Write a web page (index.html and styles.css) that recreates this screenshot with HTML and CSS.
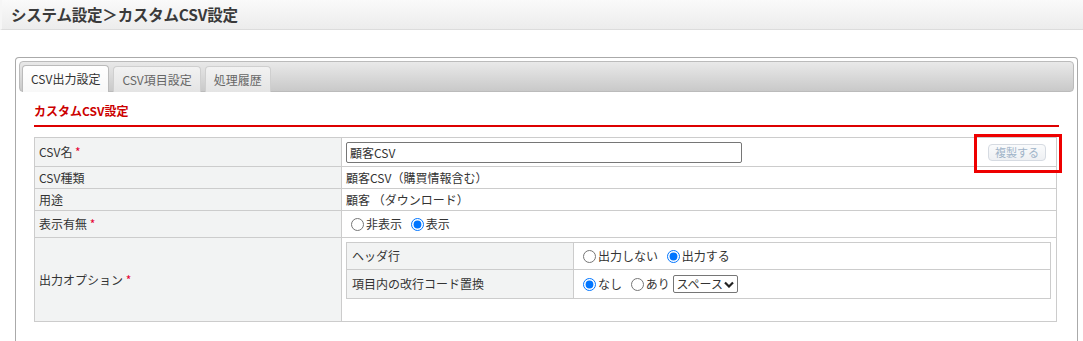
FILE: index.html
```html
<!DOCTYPE html>
<html lang="ja">
<head>
    <meta charset="UTF-8">
    <meta name="viewport" content="width=device-width, initial-scale=1.0">
    <title>カスタムCSV設定</title>
    <link rel="stylesheet" href="styles.css">
</head>
<body>
    <div class="page-header">
        <h1>システム設定＞カスタムCSV設定</h1>
    </div>

    <div class="panel">
        <!-- Tabs -->
        <div class="tab-bar">
            <div class="tab active">CSV出力設定</div>
            <div class="tab">CSV項目設定</div>
            <div class="tab">処理履歴</div>
        </div>

        <div class="panel-body">
            <h2 class="section-title">カスタムCSV設定</h2>

            <table class="form-table">
                <tr class="row-name">
                    <th>CSV名 <span class="req">*</span></th>
                    <td>
                        <div class="name-cell">
                            <input type="text" class="name-input" value="顧客CSV">
                            <span class="mark">
                                <button class="copy-btn" disabled>複製する</button>
                            </span>
                        </div>
                    </td>
                </tr>
                <tr class="row-short">
                    <th>CSV種類</th>
                    <td>顧客CSV（購買情報含む）</td>
                </tr>
                <tr class="row-short">
                    <th>用途</th>
                    <td>顧客 （ダウンロード）</td>
                </tr>
                <tr class="row-visible">
                    <th>表示有無 <span class="req">*</span></th>
                    <td>
                        <label><input type="radio" name="visible">非表示</label>
                        <label><input type="radio" name="visible" checked>表示</label>
                    </td>
                </tr>
                <tr class="row-options">
                    <th>出力オプション <span class="req">*</span></th>
                    <td class="options-cell">
                        <table class="sub-table">
                            <tr class="sub-row1">
                                <th>ヘッダ行</th>
                                <td>
                                    <label><input type="radio" name="header">出力しない</label>
                                    <label><input type="radio" name="header" checked>出力する</label>
                                </td>
                            </tr>
                            <tr class="sub-row2">
                                <th>項目内の改行コード置換</th>
                                <td>
                                    <label><input type="radio" name="newline" checked>なし</label>
                                    <label><input type="radio" name="newline">あり</label>
                                    <select class="replace-select">
                                        <option>スペース</option>
                                    </select>
                                </td>
                            </tr>
                        </table>
                    </td>
                </tr>
            </table>
        </div>
    </div>
</body>
</html>
```

FILE: styles.css
```css
body {
    margin: 0;
    font-family: "Noto Sans CJK JP", sans-serif;
    font-size: 12px;
    color: #333;
    background: #fff;
    height: 341px;
    overflow: hidden;
}
.page-header {
    height: 29px;
    background: linear-gradient(#fafafa, #ececec);
    border-bottom: 1px solid #dcdcdc;
    border-left: 2px solid #f6f6f6;
}
.page-header h1 {
    margin: 0;
    padding-left: 9px;
    font-size: 15.5px;
    line-height: 29px;
    font-weight: bold;
    color: #3a3a3a;
    letter-spacing: -0.2px;
}
.panel {
    margin: 27px 0 0 15px;
    width: 1055px;
    height: 280px;
    padding: 3px;
    border: 1px solid #aaa;
    border-bottom: none;
    border-radius: 4px 4px 0 0;
}
.tab-bar {
    display: flex;
    align-items: flex-end;
    height: 29px;
    padding-left: 2px;
    border: 1px solid #bbb;
    border-radius: 4px;
    background: linear-gradient(#e9e9e9, #c9c9c9);
}
.tab {
    height: 25px;
    line-height: 25px;
    padding: 0 8px;
    margin-right: 4px;
    margin-bottom: -1px;
    border: 1px solid #cfcfcf;
    border-bottom: none;
    border-radius: 4px 4px 0 0;
    background: linear-gradient(#f2f2f2, #e4e4e4);
    color: #666;
}
.tab.active {
    background: linear-gradient(#fff, #f8f8f8);
    border-color: #bbb;
    color: #333;
    height: 26px;
}
.panel-body {
    padding: 10px 15px;
}
.section-title {
    margin: 0 0 10px;
    padding-bottom: 5px;
    font-size: 12px;
    line-height: 18px;
    font-weight: bold;
    color: #c00;
    border-bottom: 2px solid #d00;
}
.form-table {
    width: 1023px;
    border-collapse: collapse;
}
.form-table th,
.form-table td {
    border: 1px solid #ccc;
    padding: 0 4px;
    text-align: left;
    font-weight: normal;
    line-height: 18px;
}
.form-table > tbody > tr > th {
    width: 298px;
    background: #f2f3f3;
}
.req {
    color: #e60033;
}
.row-name { height: 29px; }
.row-short { height: 22px; }
.row-visible { height: 27px; }
.row-options { height: 84px; }
.name-cell {
    display: flex;
    align-items: center;
    justify-content: space-between;
    padding-right: 6px;
}
.name-input {
    width: 396px;
    height: 21px;
    box-sizing: border-box;
    margin: 0;
    padding: 0 3px;
    border: 1px solid #767676;
    border-radius: 2px;
    font-family: inherit;
    font-size: 12px;
    color: #333;
}
.mark {
    position: relative;
    display: inline-block;
}
.mark::after {
    content: "";
    position: absolute;
    left: -14px;
    right: -16px;
    top: -9px;
    bottom: -12px;
    border: 3px solid #e00;
}
.copy-btn {
    width: 58px;
    height: 17px;
    padding: 0;
    border: 1px solid #d6dbe2;
    border-radius: 4px;
    background: linear-gradient(#fafbfc, #eef0f3);
    color: #9fb3c8;
    font-family: inherit;
    font-size: 11px;
    line-height: 15px;
}
label {
    margin-right: 1px;
}
input[type="radio"] {
    vertical-align: -2px;
    margin-right: 2px;
}
.options-cell {
    vertical-align: top;
    padding-top: 4px !important;
}
.sub-table {
    width: 705px;
    border-collapse: collapse;
}
.sub-table th {
    width: 217px;
    background: #f2f3f3;
    padding-left: 5px !important;
}
.sub-row1 { height: 27px; }
.sub-row2 { height: 29px; }
.sub-table td {
    padding-left: 4px !important;
}
.replace-select {
    -webkit-appearance: none;
    appearance: none;
    height: 18px;
    width: 65px;
    box-sizing: border-box;
    padding: 0 14px 0 2px;
    font-family: inherit;
    font-size: 12px;
    line-height: 16px;
    color: #333;
    border: 1px solid #767676;
    border-radius: 2px;
    background: #fff url("data:image/svg+xml;utf8,<svg xmlns='http://www.w3.org/2000/svg' width='10' height='7' viewBox='0 0 10 7'><path d='M1 1.5 L5 5.5 L9 1.5' fill='none' stroke='%23222' stroke-width='2.2'/></svg>") no-repeat right 3px center;
    vertical-align: 0;
}
```
